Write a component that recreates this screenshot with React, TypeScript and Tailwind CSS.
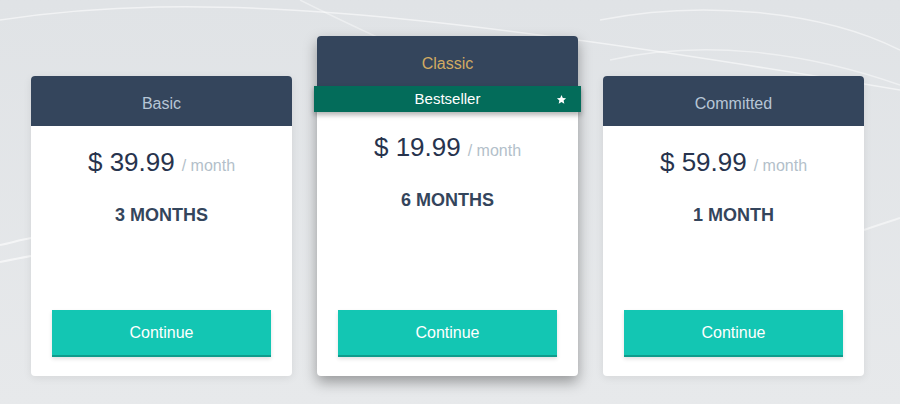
const plans = [
  { name: "Basic", price: "39.99", term: "3 MONTHS", featured: false },
  { name: "Classic", price: "19.99", term: "6 MONTHS", featured: true },
  { name: "Committed", price: "59.99", term: "1 MONTH", featured: false },
];

function Backdrop() {
  return (
    <svg
      className="pointer-events-none absolute inset-0 h-full w-full"
      viewBox="0 0 900 404"
      preserveAspectRatio="none"
      fill="none"
    >
      <path d="M0 20 C 200 -10, 420 10, 900 90" stroke="#ffffff" strokeOpacity="0.55" strokeWidth="1.5" />
      <path d="M600 20 C 700 0, 820 10, 900 50" stroke="#ffffff" strokeOpacity="0.5" strokeWidth="1.5" />
      <path d="M610 60 C 700 40, 800 50, 900 85" stroke="#ffffff" strokeOpacity="0.45" strokeWidth="1.5" />
      <path d="M300 0 C 420 60, 500 90, 540 110" stroke="#ffffff" strokeOpacity="0.4" strokeWidth="1.5" />
      <path d="M0 245 C 10 243, 20 240, 31 238" stroke="#ffffff" strokeOpacity="0.6" strokeWidth="2" />
      <path d="M0 262 C 10 260, 20 258, 31 256" stroke="#ffffff" strokeOpacity="0.6" strokeWidth="2" />
      <path d="M864 230 C 875 226, 888 222, 900 218" stroke="#ffffff" strokeOpacity="0.5" strokeWidth="2" />
    </svg>
  );
}

function Star() {
  return (
    <svg viewBox="0 0 24 24" className="h-[11px] w-[11px]" fill="#ffffff">
      <path d="M12 2l2.9 6.9 7.1.6-5.4 4.7 1.6 7.2L12 17.6 5.8 21.4l1.6-7.2L2 9.5l7.1-.6z" />
    </svg>
  );
}

function PlanCard({ name, price, term, featured }: (typeof plans)[number]) {
  return (
    <div
      className={
        featured
          ? "flex h-[340px] w-[261px] flex-col rounded-[4px] bg-white shadow-[0_6px_14px_rgba(0,0,0,0.35)]"
          : "flex h-[300px] w-[261px] flex-col rounded-[4px] bg-white shadow-[0_2px_8px_rgba(0,0,0,0.08)]"
      }
    >
      <div
        className={
          featured
            ? "flex h-[50px] items-center justify-center rounded-t-[4px] bg-[#34455c] pt-[5px] text-[16px] text-[#d2ab62]"
            : "flex h-[50px] items-center justify-center rounded-t-[4px] bg-[#34455c] pt-[5px] text-[16px] text-[#b7c6d6]"
        }
      >
        {name}
      </div>
      {featured && (
        <div className="relative -mx-[3px] flex h-[26px] items-center justify-center bg-[#036c5a] text-[15px] text-white shadow-[0_3px_5px_rgba(0,0,0,0.3)]">
          Bestseller
          <span className="absolute right-[14px] top-[8px]">
            <Star />
          </span>
        </div>
      )}
      <div
        className={
          featured
            ? "mt-[20px] flex items-baseline justify-center leading-[30px]"
            : "mt-[21px] flex items-baseline justify-center leading-[30px]"
        }
      >
        <span className="text-[26px] text-[#27334d]">$ {price}</span>
        <span className="ml-[7px] text-[16px] text-[#b3bfca]">/ month</span>
      </div>
      <div className="mt-[24px] text-center text-[18px] font-bold leading-[20px] text-[#34455c]">
        {term}
      </div>
      <button className="mx-[21px] mb-[19px] mt-auto h-[47px] border-b-2 border-[#0e9c8c] bg-[#13c6b3] text-[16px] text-white shadow-[0_2px_4px_rgba(0,0,0,0.12)]">
        Continue
      </button>
    </div>
  );
}

export default function App() {
  return (
    <main className="relative h-[404px] w-[900px] overflow-hidden bg-gradient-to-b from-[#e0e3e6] to-[#e7e9eb] font-['Liberation_Sans',Arial,sans-serif]">
      <Backdrop />
      <div className="relative flex h-full items-end gap-[25px] pb-[28px] pl-[31px]">
        {plans.map((p) => (
          <PlanCard key={p.name} {...p} />
        ))}
      </div>
    </main>
  );
}
